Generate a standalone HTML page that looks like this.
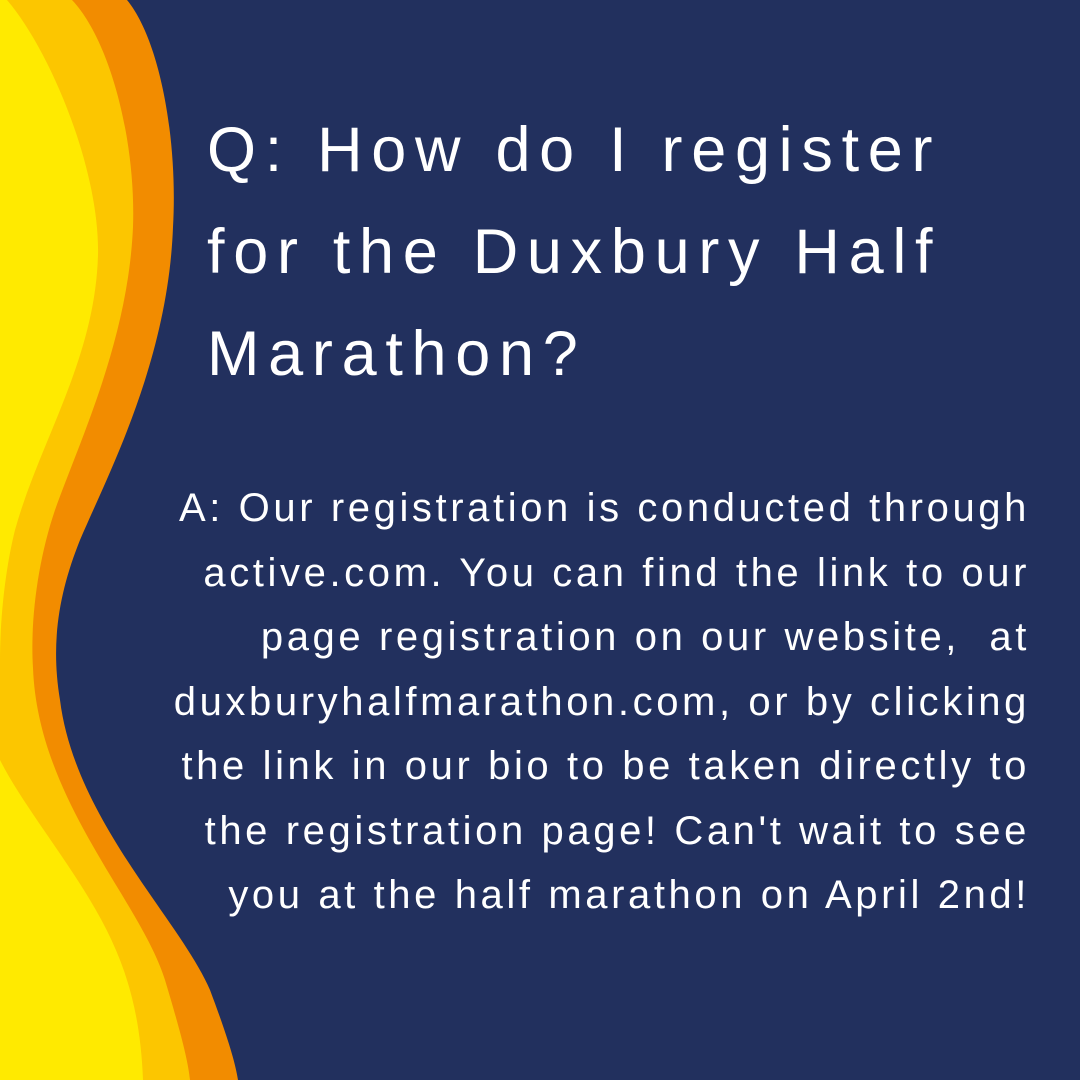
<!DOCTYPE html>
<html><head><meta charset="utf-8"><style>
html,body{margin:0;padding:0}
body{width:1080px;height:1080px;background:#22305e;position:relative;overflow:hidden;font-family:"Liberation Sans",sans-serif;color:#fff}
svg{position:absolute;left:0;top:0}
.q{position:absolute;left:207px;top:99px;font-size:63px;line-height:102px;letter-spacing:8.7px;white-space:nowrap}
.a{position:absolute;right:50px;top:476px;font-size:40px;line-height:64.5px;text-align:right;white-space:nowrap;letter-spacing:3.6px}
</style></head><body>
<svg width="1080" height="1080" viewBox="0 0 1080 1080">
<path d="M0 0 L127 0 C160 40 178 140 173 227 C168 360 110 470 80 540 C60 590 50 640 60 700 C75 820 180 920 210 990 C225 1030 235 1060 238 1080 L0 1080 Z" fill="#f28c00"/>
<path d="M0 0 L72 0 C110 40 136 140 133 227 C128 340 80 440 55 510 C38 560 30 620 33 668 C38 800 140 900 165 980 C180 1030 188 1060 190 1080 L0 1080 Z" fill="#fcc600"/>
<path d="M0 0 L7 0 C50 50 100 170 98 255 C95 360 40 440 15 530 C5 570 0 620 0 661 L0 1080 L143 1080 C140 1000 120 950 90 900 C60 850 20 800 0 760 Z" fill="#ffea00"/>
</svg>
<div class="q">Q: How do I register<br>for the Duxbury Half<br>Marathon?</div>
<div class="a">A: Our registration is conducted through<br>active.com. You can find the link to our<br>page registration on our website,&nbsp; at<br>duxburyhalfmarathon.com, or by clicking<br>the link in our bio to be taken directly to<br>the registration page! Can't wait to see<br>you at the half marathon on April 2nd!</div>
</body></html>
